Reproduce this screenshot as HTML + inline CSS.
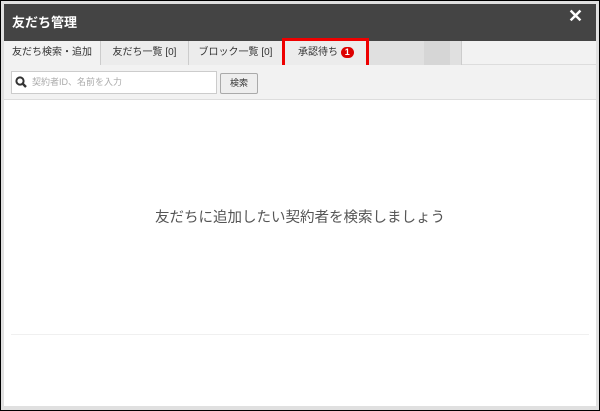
<html><head><style>
body{margin:0;width:600px;height:411px;background:#000;font-family:"Liberation Sans","Noto Sans CJK JP",sans-serif;position:relative;overflow:hidden}
div{position:absolute;box-sizing:border-box}
.t{top:41px;height:24px;font-size:10px;color:#333;text-align:center;line-height:24px;border-right:1px solid #ccc;background:#ececec}
</style></head><body>
<div style="left:1px;top:1px;width:598px;height:409px;background:#e0e0e0"></div>
<div style="left:4px;top:4px;width:592px;height:37px;background:#444;color:#fff;font-weight:bold;font-size:13px;line-height:37px;padding-left:8px">友だち管理</div>
<div style="left:568px;top:6px;color:#fff;font-size:18px;font-weight:bold">✕</div>
<div style="left:4px;top:41px;width:592px;height:24px;background:#f2f2f2;border-bottom:1px solid #ddd"></div>
<div class="t" style="left:4px;width:97px;background:#f2f2f2;height:25px">友だち検索・追加</div>
<div class="t" style="left:101px;width:88px">友だち一覧 [0]</div>
<div class="t" style="left:189px;width:94px">ブロック一覧 [0]</div>
<div class="t" style="left:283px;width:85px;text-align:left;padding-left:15px">承認待ち <span style="display:inline-block;background:#d00;color:#fff;border-radius:6px;padding:0 4px;line-height:11px;font-size:9px;font-weight:bold">1</span></div>
<div style="left:368px;top:41px;width:56px;height:24px;background:#e0e0e0"></div>
<div style="left:424px;top:41px;width:26px;height:24px;background:#d6d6d6"></div>
<div style="left:450px;top:41px;width:12px;height:24px;background:#e0e0e0;border-right:1px solid #ccc"></div>
<div style="left:282px;top:38px;width:87px;height:31px;border:3px solid #e00"></div>
<div style="left:4px;top:65px;width:592px;height:35px;background:#f2f2f2;border-bottom:1px solid #ddd"></div>
<div style="left:11px;top:71px;width:206px;height:23px;background:#fff;border:1px solid #ccc;font-size:9px;color:#aaa;line-height:21px;padding-left:20px">契約者ID、名前を入力</div>
<svg style="position:absolute;left:15px;top:76px" width="12" height="12"><circle cx="5" cy="5" r="3.6" fill="none" stroke="#333" stroke-width="2"/><line x1="7.5" y1="7.5" x2="11" y2="11" stroke="#333" stroke-width="2.4"/></svg>
<div style="left:220px;top:73px;width:38px;height:21px;background:#eee;border:1px solid #aaa;border-radius:2px;font-size:9px;text-align:center;line-height:19px;color:#333">検索</div>
<div style="left:4px;top:100px;width:592px;height:306px;background:#fff"></div>
<div style="left:4px;top:206px;width:592px;text-align:center;font-size:14.5px;color:#555">友だちに追加したい契約者を検索しましょう</div>
<div style="left:11px;top:334px;width:578px;height:1px;background:#f0f0f0"></div>
</body></html>
